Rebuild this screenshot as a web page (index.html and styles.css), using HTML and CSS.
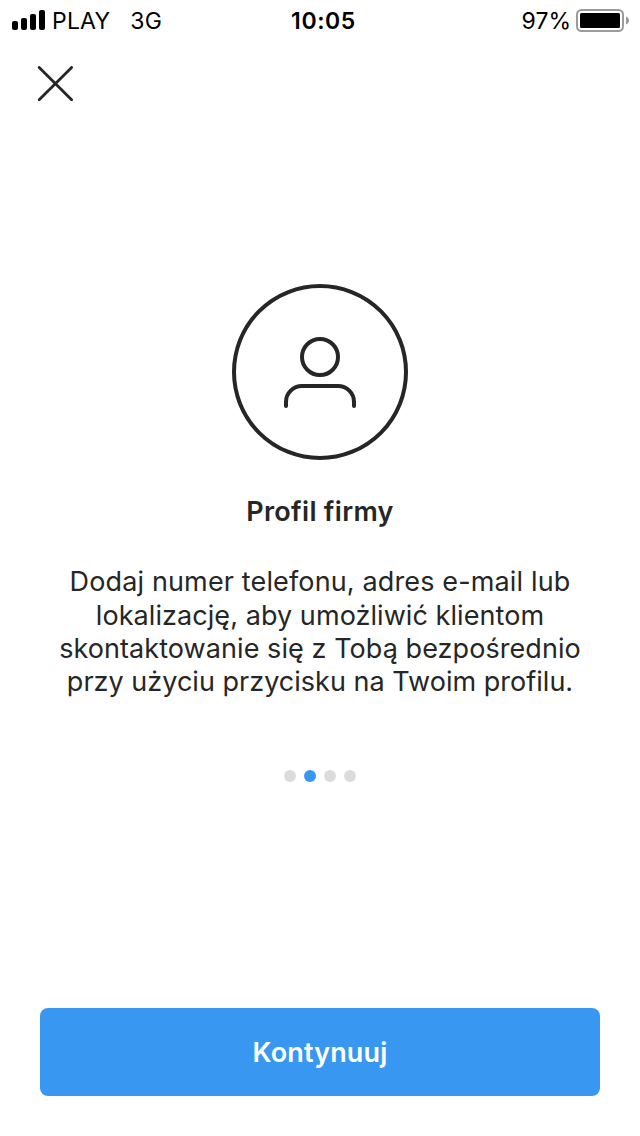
FILE: index.html
```html
<!DOCTYPE html>
<html lang="pl">
  <head>
    <meta charset="UTF-8" />
    <meta name="viewport" content="width=device-width, initial-scale=1.0" />
    <title>Profil firmy</title>
    <link rel="stylesheet" href="styles.css">
  </head>
  <body>
    <div class="status">
      <div class="status_left">
        <svg class="signal" width="34" height="20" viewBox="0 0 34 20">
          <rect x="0" y="11" width="6" height="9" rx="2" />
          <rect x="9" y="8" width="6" height="12" rx="2" />
          <rect x="18" y="4" width="6" height="16" rx="2" />
          <rect x="27" y="0" width="6" height="20" rx="2" />
        </svg>
        <span class="carrier">PLAY</span>
        <span class="network">3G</span>
      </div>
      <div class="time">10:05</div>
      <div class="status_right">
        <span class="percent">97%</span>
        <svg class="battery" width="54" height="23" viewBox="0 0 54 23">
          <rect x="1" y="1" width="46" height="21" rx="4.5" fill="none" stroke="#9b9b9b" stroke-width="2" />
          <rect x="4" y="4" width="40" height="15" rx="1.5" />
          <path d="M50 7.5c4 1.5 4 6.5 0 8z" fill="#9b9b9b" />
        </svg>
      </div>
    </div>

    <div class="nav">
      <svg class="close" width="36" height="36" viewBox="0 0 36 36">
        <path d="M2.2 1.4l32.4 32.4M34.6 1.4l-32.4 32.4" />
      </svg>
    </div>

    <div class="content">
      <svg class="avatar" width="176" height="176" viewBox="0 0 176 176">
        <circle cx="88" cy="88" r="86" />
        <circle cx="88" cy="73" r="18" />
        <path d="M54 122v-4a16 16 0 0 1 16-16h36a16 16 0 0 1 16 16v4" />
      </svg>
      <h1 class="title">Profil firmy</h1>
      <p class="text">
        <span class="line line1">Dodaj numer telefonu, adres e-mail lub</span>
        <span class="line line2">lokalizację, aby umożliwić klientom</span>
        <span class="line line3">skontaktowanie się z Tobą bezpośrednio</span>
        <span class="line line4">przy użyciu przycisku na Twoim profilu.</span>
      </p>
      <div class="dots">
        <span class="dot"></span>
        <span class="dot active"></span>
        <span class="dot"></span>
        <span class="dot"></span>
      </div>
    </div>

    <button class="btn">Kontynuuj</button>
  </body>
</html>
```
FILE: styles.css
```css
body {
  display: flex;
  flex-direction: column;
  height: 1136px;
  margin: 0;
  padding-bottom: 40px;
  box-sizing: border-box;
  background-color: white;
  color: #262626;
  font-family: Inter, "Liberation Sans", sans-serif;
}
.status {
  display: grid;
  grid-template-columns: 1fr auto 1fr;
  align-items: center;
  height: 40px;
  padding: 0 10px 0 12px;
  color: black;
  font-size: 23px;
  line-height: 38px;
}
.status_left,
.status_right {
  display: flex;
  align-items: center;
}
.carrier,
.network,
.time,
.percent {
  padding-top: 2px;
}
.carrier {
  margin-left: 6px;
  letter-spacing: 0.2px;
}
.network {
  margin-left: 20px;
  letter-spacing: 0.3px;
}
.time {
  padding-left: 5px;
  font-weight: 600;
  letter-spacing: 0.6px;
}
.status_right {
  justify-content: flex-end;
}
.battery {
  margin-left: 5px;
}
.nav {
  height: 36px;
  padding: 26px 37px 0;
}
.close {
  display: block;
  fill: none;
  stroke: #262626;
  stroke-width: 2.8;
  stroke-linecap: round;
}
.content {
  display: flex;
  flex-direction: column;
  align-items: center;
  flex: 1;
  padding-top: 182px;
}
.avatar {
  fill: none;
  stroke: #262626;
  stroke-width: 4;
  stroke-linecap: round;
}
.title {
  margin: 35px 0 0;
  font-size: 27px;
  font-weight: 600;
  line-height: 34px;
  letter-spacing: 0.3px;
}
.text {
  margin: 36.3px 0 0;
  font-size: 27px;
  line-height: 33.33px;
  text-align: center;
}
.line {
  display: block;
  white-space: nowrap;
}
.line1 {
  letter-spacing: 0.14px;
}
.line2,
.line3 {
  letter-spacing: 0.07px;
}
.line4 {
  letter-spacing: 0.02px;
}
.dots {
  display: flex;
  gap: 8px;
  margin-top: 71.4px;
}
.dot {
  width: 12px;
  height: 12px;
  border-radius: 50%;
  background-color: #dbdbdb;
}
.active {
  background-color: #3897f0;
}
.btn {
  height: 88px;
  margin: 0 40px;
  padding-top: 2px;
  border: none;
  border-radius: 8px;
  background-color: #3897f0;
  color: white;
  font-family: inherit;
  font-size: 27px;
  font-weight: 600;
  letter-spacing: 0.15px;
}
```
